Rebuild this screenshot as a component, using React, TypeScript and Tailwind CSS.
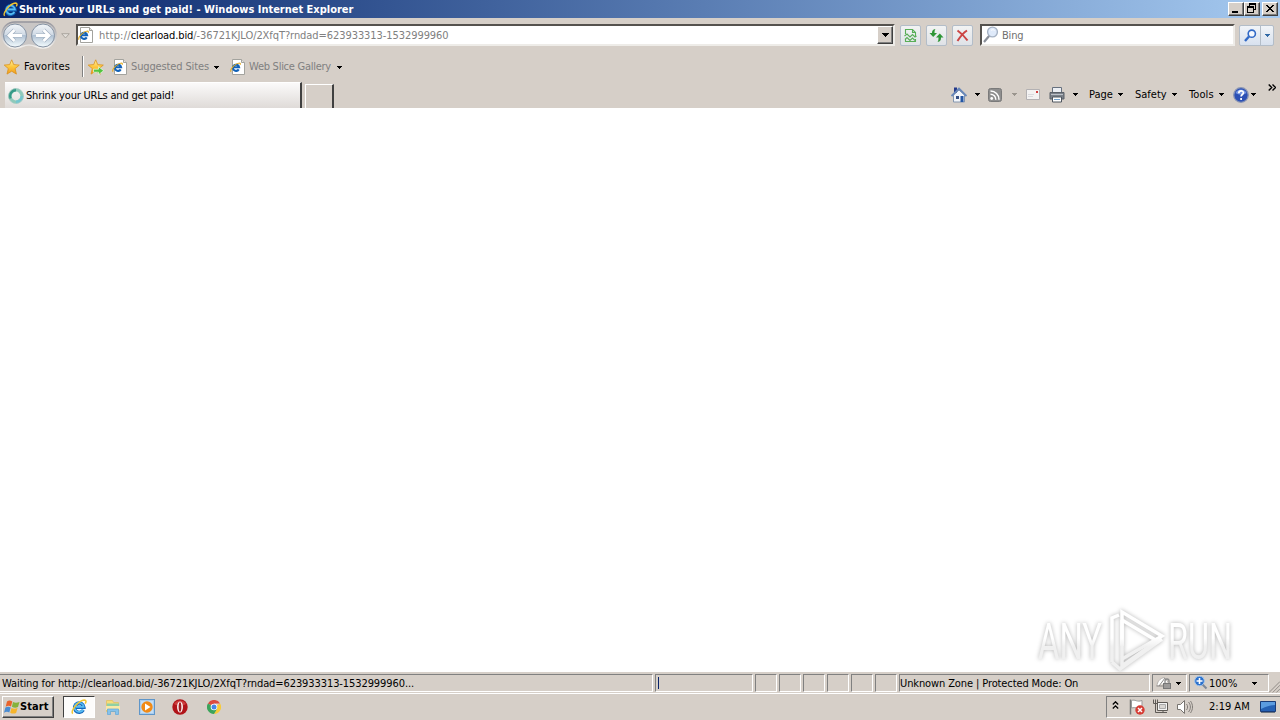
import type { ReactNode } from 'react'

const statusPanes = [0, 1, 2, 3, 4]

function Caret({ className = '' }: { className?: string }) {
  return (
    <svg className={`w-[5px] h-[3px] shrink-0 ${className}`} viewBox="0 0 5 3" shapeRendering="crispEdges">
      <path d="M0 0h5v1H4v1H3v1H2V2H1V1H0z" fill="currentColor" />
    </svg>
  )
}

function IeMark({ className = '' }: { className?: string }) {
  return (
    <svg className={`shrink-0 ${className}`} viewBox="0 0 16 16" fill="none">
      <path d="M12.300 11A4.700 4.700 0 1 1 12.900 8.300H5" stroke="#1668bd" strokeWidth="3.400" />
      <path d="M12.200 10.500A4.600 4.600 0 1 1 12.700 7.900H5" stroke="#58bdf2" strokeWidth="1.700" />
      <path d="M1.800 14.600C-.8 12.500 7.500 1.200 13.300 1c2.200 0 1.900 2 .9 3.600" stroke="#f3c52e" strokeWidth="1.500" />
    </svg>
  )
}

function IePage() {
  return (
    <svg className="w-4 h-4 shrink-0" viewBox="0 0 16 16" fill="none">
      <path d="M2.500.5h9l3 3v12h-12z" fill="#fff" stroke="#a3a39e" />
      <path d="M11.500.5v3h3" fill="#e4e4e0" stroke="#a3a39e" />
      <path d="M8.700 10.400A3.100 3.100 0 1 1 9.100 8.300H3.800" stroke="#1262b8" strokeWidth="2.100" />
      <path d="M.9 12.800C-.3 10 5.500 4 9.500 4c1 .1 1 1 .6 1.700" stroke="#e3ac25" strokeWidth="1.100" />
    </svg>
  )
}

function Star({ arrow = false }: { arrow?: boolean }) {
  return (
    <svg className="w-4 h-4 shrink-0" viewBox="0 0 16 16">
      <defs>
        <linearGradient id="star" x1="0" y1="0" x2="0" y2="1">
          <stop offset="0" stopColor="#fff3a6" />
          <stop offset=".5" stopColor="#fdc63c" />
          <stop offset="1" stopColor="#f19a1b" />
        </linearGradient>
      </defs>
      <path d="M7.700.8l2 4.800 5.600.5-4.200 3.500 1.300 5.500-4.700-2.900L3 15.100l1.300-5.500L.2 6.100l5.500-.5z" fill="url(#star)" stroke="#d9901c" strokeWidth=".8" strokeLinejoin="round" />
      {arrow && <path d="M5.500 10.200h5V7.700l5.200 4-5.200 4v-2.500h-5z" fill="#52c43f" stroke="#eefbe9" strokeWidth=".7" />}
    </svg>
  )
}

function NavButtons() {
  return (
    <svg className="w-[58px] h-8 shrink-0" viewBox="0 0 58 32" fill="none">
      <defs>
        <linearGradient id="orb" x1="0" y1="0" x2="0" y2="1">
          <stop offset="0" stopColor="#f3f6f9" />
          <stop offset=".46" stopColor="#d0dae5" />
          <stop offset=".5" stopColor="#b0c1d3" />
          <stop offset="1" stopColor="#f5fdff" />
        </linearGradient>
        <linearGradient id="rim" x1="0" y1="0" x2="0" y2="1">
          <stop offset="0" stopColor="#94949c" />
          <stop offset="1" stopColor="#f4f2ef" />
        </linearGradient>
      </defs>
      <path d="M15 4h28c8 0 13 6 13 12.500S51 30 43 30c-6 0-8-3-14-3s-8 3-14 3C7 30 2 23 2 16.500S7 4 15 4z" fill="#c9c6c5" stroke="url(#rim)" strokeWidth="1.500" />
      <circle cx="15" cy="17.500" r="11.500" fill="url(#orb)" stroke="#8592a3" />
      <circle cx="43" cy="17.500" r="11.500" fill="url(#orb)" stroke="#8592a3" />
      <path d="M22 17.500H9m5.500-5.500L9 17.500l5.500 5.500" stroke="#9fafc0" strokeWidth="4" />
      <path d="M22 17.500H9m5.500-5.500L9 17.500l5.500 5.500" stroke="#fff" strokeWidth="2.800" />
      <path d="M36 17.500h13m-5.500-5.500l5.500 5.500-5.500 5.500" stroke="#9fafc0" strokeWidth="4" />
      <path d="M36 17.500h13m-5.500-5.500l5.500 5.500-5.500 5.500" stroke="#fff" strokeWidth="2.800" />
    </svg>
  )
}

function WindowButton({ children, className = '' }: { children: ReactNode; className?: string }) {
  return (
    <button className={`w-4 h-[14px] bg-[#d6cfc8] border border-t-white border-l-white border-r-[#404040] border-b-[#404040] shadow-[inset_-1px_-1px_0_#808080] ${className}`}>
      <svg className="w-[14px] h-3" viewBox="0 0 14 12" shapeRendering="crispEdges" fill="none">
        {children}
      </svg>
    </button>
  )
}

function ToolButton({ children, className = '' }: { children: ReactNode; className?: string }) {
  return (
    <button className={`w-[21px] h-[21px] flex items-center justify-center rounded-[2px] border border-[#b3bdc8] bg-linear-to-b from-[#f2f3f3] to-[#dfe2e7] ${className}`}>
      {children}
    </button>
  )
}

function TitleBar() {
  return (
    <div className="h-[18px] flex items-center pl-[3px] pr-[2px] bg-linear-to-r from-[#0a246a] to-[#a6caf0] text-white">
      <IeMark className="w-[15px] h-[15px]" />
      <span className="ml-px pt-px font-bold tracking-[-0.01px]">Shrink your URLs and get paid! - Windows Internet Explorer</span>
      <WindowButton className="ml-auto">
        <path d="M3 8h6v2H3z" fill="#000" />
      </WindowButton>
      <WindowButton>
        <path d="M4 0h7v7H9V6h1V2H5v1H4zM2 3h7v7H2zM3 5v4h5V5z" fill="#000" fillRule="evenodd" />
      </WindowButton>
      <WindowButton className="ml-[2px]">
        <path d="M3 2h2v1h1v1h2V3h1V2h2v1h-1v1H9v1H8v1h1v1h1v1h1v1H9V8H8V7H6v1H5v1H3V8h1V7h1V6h1V5H5V4H4V3H3z" fill="#000" />
      </WindowButton>
    </div>
  )
}

function AddressRow() {
  return (
    <div className="h-[34px] flex items-start">
      <NavButtons />
      <svg className="w-[9px] h-[6px] ml-[3px] mt-[15px] shrink-0" viewBox="0 0 9 6">
        <path d="M.7.7h7.600L4.500 5z" fill="#e2ded9" stroke="#aaa59e" />
      </svg>
      <div className="ml-[6px] mt-[6px] w-[819px] h-[22px] flex items-center bg-white border-2 border-t-[#55524e] border-l-[#55524e] border-r-[#eeece8] border-b-[#eeece8]">
        <IePage />
        <span className="ml-[5px] pt-[2px] text-[#808080] grow flex">
          <span className="tracking-[0.2px]">http://</span>
          <span className="text-black tracking-[-0.12px]">clearload.bid</span>
          <span className="tracking-[-0.07px]">/-36721KJLO/2XfqT?rndad=623933313-1532999960</span>
        </span>
        <button className="w-4 h-[18px] flex items-center justify-center bg-[#d6cfc8] border border-t-white border-l-white border-r-[#404040] border-b-[#404040] shadow-[inset_-1px_-1px_0_#808080]">
          <svg className="w-[7px] h-1" viewBox="0 0 7 4" shapeRendering="crispEdges">
            <path d="M0 0h7v1H6v1H5v1H4v1H3V3H2V2H1V1H0z" />
          </svg>
        </button>
      </div>
      <ToolButton className="ml-[5px] mt-[7px]">
        <svg className="w-[13px] h-[15px]" viewBox="0 0 13 15" fill="none" stroke="#58ae57" strokeWidth="1.100">
          <path d="M1.500 6V1.500h7l3 3V8M8.500 1.500v3h3M1.500 11v2.500h10V11" />
          <path d="M.5 8L3 6l3 3 2.500-2.500L11 9l1.500-1M1 11.500l2-2 3 3L8.500 10l2.500 2.500" />
        </svg>
      </ToolButton>
      <ToolButton className="ml-[5px] mt-[7px]">
        <svg className="w-[15px] h-[13px]" viewBox="0 0 15 13" fill="#2f9637">
          <path d="M6.500 0C3.500.5 3 2 3 4H.5l3.700 4L8 4H5.500c0-2 .2-3 1-4z" />
          <path d="M8.500 13c3-.5 3.500-2 3.500-4.500h2.500L10.800 4.500 7 8.500h2.500c0 2-.2 3.500-1 4.500z" />
        </svg>
      </ToolButton>
      <ToolButton className="ml-[5px] mt-[7px]">
        <svg className="w-[13px] h-[13px]" viewBox="0 0 13 13" fill="none" stroke="#cc4544" strokeWidth="2">
          <path d="M1.500 1.500C5 4 9 8 11.500 11.500M11 1.500C7 4 4 8 1.500 12" />
        </svg>
      </ToolButton>
      <div className="ml-[7px] mt-[6px] w-[255px] h-[22px] flex items-center bg-white border-2 border-t-[#55524e] border-l-[#55524e] border-r-[#eeece8] border-b-[#eeece8]">
        <svg className="w-4 h-[18px] ml-px" viewBox="0 0 16 18" fill="none">
          <path d="M1 16l5.500-6.500" stroke="#8a8f99" strokeWidth="2.200" />
          <circle cx="9.500" cy="6" r="4.900" fill="#dfeafa" stroke="#a6b2c4" strokeWidth="1.400" />
          <path d="M8 4.500c1-1 2.500-1 3.500 0" stroke="#fff" />
        </svg>
        <span className="ml-[3px] pt-[2px] text-[#6f6f6f] tracking-[-0.2px]">Bing</span>
      </div>
      <div className="ml-1 mt-[7px] w-[35px] h-[21px] flex border border-[#b3bdc8] rounded-[2px] bg-linear-to-b from-[#f1f4f8] to-[#d8e1ee]">
        <div className="w-[21px] flex items-center justify-center border-r border-[#b3bdc8]">
          <svg className="w-[13px] h-[13px]" viewBox="0 0 13 13" fill="none" stroke="#3169c6">
            <path d="M1 12l4-4.500" strokeWidth="2.400" />
            <circle cx="7.800" cy="4.700" r="3.600" fill="#f4f8ff" strokeWidth="1.600" />
          </svg>
        </div>
        <div className="grow flex items-center justify-center text-[#3169a6]">
          <Caret />
        </div>
      </div>
    </div>
  )
}

function FavoritesRow() {
  return (
    <div className="h-[29px] flex items-center pl-1">
      <Star />
      <span className="ml-1 w-[46px] tracking-[0.15px]">Favorites</span>
      <div className="ml-3 w-[2px] h-[21px] bg-[#808080] border-r border-white" />
      <span className="ml-1">
        <Star arrow />
      </span>
      <span className="ml-2">
        <IePage />
      </span>
      <span className="ml-[3px] pt-px w-[79px] text-[#808080] tracking-[-0.13px]">Suggested Sites</span>
      <Caret className="ml-[4px] mt-px" />
      <span className="ml-[11px]">
        <IePage />
      </span>
      <span className="ml-[3px] pt-px w-[84px] text-[#808080] tracking-[-0.26px]">Web Slice Gallery</span>
      <Caret className="ml-1 mt-px" />
    </div>
  )
}

function CommandBar() {
  return (
    <div className="ml-auto h-[27px] flex items-center">
      <svg className="w-4 h-4" viewBox="0 0 16 16">
        <path d="M2.500 8v7h11V8L8 3z" fill="#f2f5fa" stroke="#8496af" />
        <path d="M3 .5h3v5H3z" fill="#24398a" />
        <path d="M.5 9L8 1.500 15.500 9" fill="none" stroke="#6787b9" strokeWidth="1.800" />
        <path d="M9.500 9h3v6h-3z" fill="#2456a4" />
        <path d="M5 9h3v3H5z" fill="#334e83" />
      </svg>
      <Caret className="ml-2" />
      <svg className="ml-2 w-[14px] h-[14px]" viewBox="0 0 14 14" fill="none">
        <rect x=".5" y=".5" width="13" height="13" rx="2" fill="#8e8e8e" stroke="#7a7a7a" />
        <circle cx="3.700" cy="10.500" r="1.400" fill="#fff" />
        <path d="M2.500 6.200a5.300 5.300 0 0 1 5.300 5.500M2.500 3a8.500 8.500 0 0 1 8.500 8.700" stroke="#fff" strokeWidth="1.500" />
      </svg>
      <Caret className="ml-[10px] text-[#9a958e]" />
      <svg className="ml-[9px] w-[14px] h-[11px]" viewBox="0 0 14 11">
        <path d="M.5.5h13v10H.5z" fill="#f3f2f2" stroke="#b3b1b3" />
        <path d="M10 2h2v2h-2z" fill="#d23f3f" />
        <path d="M2 5.500h6M2 7.500h5" stroke="#d9d9dd" />
      </svg>
      <svg className="ml-[9px] w-4 h-4" viewBox="0 0 16 16">
        <path d="M3.500.5h9V6h-9z" fill="#eceff4" stroke="#66707e" />
        <path d="M1 5.500h14v6.500H1z" fill="#7b818a" stroke="#5b6169" />
        <path d="M2 7.500h12" stroke="#bcc1c7" />
        <path d="M3.500 10h9v5h-9z" fill="#fff" stroke="#4f565f" />
        <path d="M5 12.500h6" stroke="#74a2cc" />
      </svg>
      <Caret className="ml-2" />
      <span className="ml-[11px] w-[25px]">Page</span>
      <Caret className="ml-1" />
      <span className="ml-3 w-8">Safety</span>
      <Caret className="ml-[5px]" />
      <span className="ml-3 w-[26px] tracking-[0.1px]">Tools</span>
      <Caret className="ml-1" />
      <svg className="ml-[9px] w-4 h-4" viewBox="0 0 16 16">
        <circle cx="8" cy="8" r="7.300" fill="#2c50b4" stroke="#8b96b4" strokeWidth="1.300" />
        <path d="M2.500 6a6 6 0 0 1 11 0c-4 2-7 2-11 0z" fill="#7596e2" />
        <path d="M5.800 6.200c0-3 4.600-3 4.600-.4 0 1.700-2.300 1.700-2.300 3.700M8.100 11v2" stroke="#fff" strokeWidth="1.700" fill="none" />
      </svg>
      <Caret className="ml-[2px]" />
      <svg className="ml-3 mr-1 mb-[14px] w-2 h-[7px]" viewBox="0 0 8 7" fill="none" stroke="#000" strokeWidth="1.400">
        <path d="M.7.5l3 3-3 3M4.500.5l3 3-3 3" />
      </svg>
    </div>
  )
}

function TabRow() {
  return (
    <div className="h-[27px] flex items-start">
      <div className="ml-[5px] mt-px w-[297px] h-[26px] flex items-center pl-[3px] bg-linear-to-b from-[#fbfafa] to-[#dfdbd8] border-t border-t-white border-r-2 border-r-[#404040]">
        <svg className="w-4 h-4 shrink-0" viewBox="0 0 16 16" fill="none">
          <circle cx="8" cy="8" r="6" stroke="#8dcabb" strokeWidth="3.200" />
          <path d="M8 2a6 6 0 0 0-5.500 8.500" stroke="#369a88" strokeWidth="2.800" />
          <path d="M8 14a6 6 0 0 0 6-6" stroke="#74c6cf" strokeWidth="2.800" />
          <circle cx="8" cy="8" r="7.500" stroke="#a9cbc4" strokeWidth=".8" />
        </svg>
        <span className="ml-[2px] pt-px tracking-[-0.2px]">Shrink your URLs and get paid!</span>
      </div>
      <div className="ml-[3px] mt-[3px] w-[29px] h-6 border-t border-l border-white border-r-2 border-r-[#404040]" />
      <CommandBar />
    </div>
  )
}

function Pane({ children, className = '' }: { children?: ReactNode; className?: string }) {
  return (
    <div className={`h-[18px] shrink-0 flex items-center border border-t-[#808080] border-l-[#808080] border-r-white border-b-white ${className}`}>
      {children}
    </div>
  )
}

function StatusBar() {
  return (
    <div className="h-[21px] pt-[2px] flex items-start border-b border-[#d6cfc8] shadow-[0_1px_0_#fff]">
      <Pane className="w-[653px] border-l-0 pl-[2px] pt-[2px] tracking-[-0.09px]">Waiting for http://clearload.bid/-36721KJLO/2XfqT?rndad=623933313-1532999960...</Pane>
      <Pane className="ml-[2px] w-[98px] pl-[2px]">
        <div className="w-px h-3 bg-[#0a246a]" />
      </Pane>
      {statusPanes.map((pane) => (
        <Pane key={pane} className="ml-[2px] w-[22px]" />
      ))}
      <Pane className="ml-[2px] w-[22px]" />
      <Pane className="ml-[2px] w-[251px] pt-[2px] tracking-[-0.11px]">Unknown Zone | Protected Mode: On</Pane>
      <Pane className="ml-[2px] w-[35px] pl-[3px]">
        <svg className="w-4 h-4" viewBox="0 0 16 16">
          <path d="M1 11C1 7 4 3 8.500 2.500L12 7" fill="#fff" stroke="#b5b0ac" />
          <path d="M3 11l6-8M.5 11h7" stroke="#8a8785" />
          <rect x="7.500" y="8.500" width="7" height="5" fill="#9c9a99" stroke="#777" />
          <path d="M9 8V6a2 2 0 0 1 4 0v2" fill="none" stroke="#888" strokeWidth="1.300" />
        </svg>
        <Caret className="ml-1" />
      </Pane>
      <Pane className="ml-[2px] w-[80px] pl-[3px]">
        <svg className="w-4 h-4 shrink-0" viewBox="0 0 16 16" fill="none">
          <path d="M9.500 9.500l4 4" stroke="#7d8796" strokeWidth="2" />
          <circle cx="6.500" cy="6" r="4.800" fill="#2d71cc" stroke="#9ec3eb" />
          <path d="M6.500 3v6M3.500 6h6" stroke="#fff" strokeWidth="1.600" />
        </svg>
        <span className="w-[30px] pt-px">100%</span>
        <Caret className="ml-[13px]" />
      </Pane>
      <svg className="w-3 h-3 mt-[7px]" viewBox="0 0 12 12" stroke="#8b8782">
        <path d="M0 12L12 0M4 12l8-8M8 12l4-4" />
      </svg>
    </div>
  )
}

function TaskBar() {
  return (
    <div className="h-[27px] flex items-center">
      <button className="ml-[2px] w-[52px] h-[22px] flex items-center bg-[#d6cfc8] border border-t-white border-l-white border-r-[#404040] border-b-[#404040] shadow-[inset_-1px_-1px_0_#808080]">
        <svg className="w-4 h-4 shrink-0 ml-px" viewBox="0 0 16 16">
          <path d="M3 2.500c2-1.500 3.500-1 5.300 0L7 7.500c-1.600-1-3.300-1-5.300.2z" fill="#e9632b" />
          <path d="M9 2.900c2 1 3.800 1 6.500 0L14 8c-2 1-4.200.8-6.100-.2z" fill="#86b23c" />
          <path d="M1.400 8.600c2-1.200 3.800-1 5.300 0L5.300 13.600c-1.600-1-3.300-1-5.300.2z" fill="#4a8cd2" />
          <path d="M7.500 8.900c2 1 3.800 1 6.100 0l-1.500 5c-2 1-4 .8-5.900-.2z" fill="#f6b52c" />
        </svg>
        <span className="pt-px font-bold tracking-[0.1px]">Start</span>
      </button>
      <div className="ml-[9px] w-8 h-[22px] flex items-center justify-center bg-[#fdfcfb] border border-t-[#404040] border-l-[#404040] border-r-white border-b-white">
        <IeMark className="w-4 h-4" />
      </div>
      <svg className="ml-[10px] w-4 h-4" viewBox="0 0 16 16">
        <path d="M1.500 1.500h6l1 2h5v9h-12z" fill="#f7dc79" stroke="#e3c470" />
        <path d="M2 4.500h12v2.500H2z" fill="#8fd0a5" />
        <path d="M1 7h14v4H1z" fill="#f9e9a7" />
        <path d="M2.500 15.500V10h11v5.500h-3v-3h-5v3z" fill="#85c2ec" stroke="#62a6d8" strokeWidth=".7" />
      </svg>
      <svg className="ml-[18px] w-4 h-4" viewBox="0 0 16 16">
        <rect x=".5" y=".5" width="15" height="15" fill="#a9cdef" stroke="#5f96c9" />
        <rect x="2" y="2" width="12" height="12" fill="#c3def6" />
        <circle cx="8" cy="8" r="5.700" fill="#f18a16" />
        <path d="M6 4.500l5.500 3.500L6 11.500z" fill="#fff" />
      </svg>
      <svg className="ml-[17px] w-4 h-4" viewBox="0 0 16 16">
        <circle cx="8" cy="8" r="7.700" fill="#b01419" />
        <path d="M2 5a7 7 0 0 1 12 0c-3 2-9 2-12 0z" fill="#cc3e3e" />
        <ellipse cx="8" cy="8" rx="2.900" ry="5.600" fill="#fff" />
        <ellipse cx="8" cy="8" rx="1.400" ry="4.700" fill="#a41b20" />
      </svg>
      <svg className="ml-[19px] w-[14px] h-[14px]" viewBox="0 0 14 14">
        <path d="M7 7L.9 3.500A7 7 0 0 1 13.100 3.500H7z" fill="#dd4b3e" />
        <path d="M7 7l6.100-3.500A7 7 0 0 1 7 14l3-5.500z" fill="#f9cb38" />
        <path d="M7 7l3 2-3 5A7 7 0 0 1 .9 3.500z" fill="#3ca45b" />
        <circle cx="7" cy="7" r="3.300" fill="#fff" />
        <circle cx="7" cy="7" r="2.500" fill="#4787e6" />
      </svg>
      <div className="ml-auto w-[174px] h-[22px] flex items-center border border-t-[#808080] border-l-[#808080] border-r-0 border-b-white">
        <svg className="ml-[5px] w-[7px] h-[8px] shrink-0 -mt-[3px]" viewBox="0 0 7 8" fill="none" stroke="#000" strokeWidth="1.300">
          <path d="M.8 3.500l2.700-2.700 2.700 2.700M.8 7.500l2.700-2.700 2.700 2.700" />
        </svg>
        <svg className="ml-[10px] w-4 h-4 shrink-0" viewBox="0 0 16 16">
          <path d="M1.500.5v15" stroke="#777" strokeWidth="1.500" />
          <path d="M2.500 1.500c4-1.500 5 2 10.500 0v7c-5 2-6-1-10.500.5z" fill="#fff" stroke="#999" />
          <circle cx="11" cy="11" r="4.700" fill="#d63c34" />
          <path d="M9 9l4 4m0-4l-4 4" stroke="#fff" strokeWidth="1.500" />
        </svg>
        <svg className="ml-2 w-4 h-4 shrink-0" viewBox="0 0 16 16" fill="none" stroke="#5e5a56">
          <path d="M4.500 3.500h10v8h-10z" fill="#f4f4f4" />
          <path d="M6.500 5.500h6v4h-6z" fill="#d9d6d3" stroke="#aaa" />
          <path d="M6 13.500h8M10 12v2" />
          <path d="M.5.500v4h4v-4M2.500.5v13h4" fill="none" />
        </svg>
        <svg className="ml-2 w-4 h-4 shrink-0" viewBox="0 0 16 16" fill="none" stroke="#77736f">
          <path d="M.5 5.500h3l4-4v13l-4-4h-3z" fill="#fff" />
          <path d="M9.500 5c1.500 2 1.500 4 0 6M11.500 3c2.500 3 2.500 7 0 10M13.500 2c2.700 4 2.700 8 0 12" strokeWidth=".9" />
        </svg>
        <span className="ml-4 w-[42px]">2:19 AM</span>
        <svg className="ml-[9px] w-4 h-4 shrink-0" viewBox="0 0 16 16">
          <path d="M.5 2.500h15v10H.5z" fill="#2561b4" stroke="#193c78" />
          <path d="M1 3h14v3c-4 0-8 1-14 4z" fill="#5b9ce0" />
          <path d="M1 13.500h14" stroke="#6b7581" />
        </svg>
      </div>
    </div>
  )
}

function Watermark() {
  return (
    <svg className="absolute left-[1020px] top-[596px] w-[230px] h-[88px] overflow-visible pointer-events-none drop-shadow-[0_0_2px_#b4b4b4]" viewBox="-10 -4 230 88">
      <defs>
        <linearGradient id="mark" gradientUnits="userSpaceOnUse" x1="0" y1="12" x2="0" y2="70">
          <stop offset=".45" stopColor="#fff" />
          <stop offset=".6" stopColor="#f0f0f0" />
        </linearGradient>
      </defs>
      <g fill="url(#mark)" fontFamily="Roboto, sans-serif" fontSize="50">
        <text x="8" y="59" textLength="64" lengthAdjust="spacingAndGlyphs">ANY</text>
        <text x="138" y="59" textLength="64" lengthAdjust="spacingAndGlyphs">RUN</text>
      </g>
      <g fill="none" stroke="url(#mark)" strokeWidth="3.500">
        <path d="M92 46V12l40 24-40 23" />
        <path d="M92 20l35 21-35 25V20" />
        <path d="M82 62V18l7-3M82 62l8 7 42-30" />
      </g>
    </svg>
  )
}

export default function App() {
  return (
    <div className="relative w-[1280px] h-[720px] overflow-hidden flex flex-col bg-[#d6cfc8] text-black text-[11px] leading-[14px] whitespace-nowrap font-['DejaVu_Sans_Condensed','DejaVu_Sans',sans-serif]">
      <TitleBar />
      <AddressRow />
      <FavoritesRow />
      <TabRow />
      <main className="grow bg-white" />
      <StatusBar />
      <TaskBar />
      <Watermark />
    </div>
  )
}
